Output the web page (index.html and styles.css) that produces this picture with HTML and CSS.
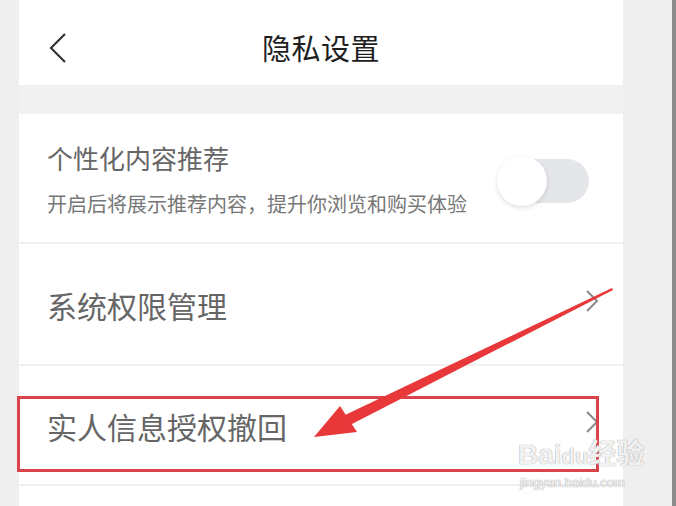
FILE: index.html
```html
<!DOCTYPE html>
<html lang="zh-CN">
<head>
  <meta charset="UTF-8">
  <meta name="viewport" content="width=device-width, initial-scale=1.0">
  <title>隐私设置</title>
  <link rel="stylesheet" href="styles.css">
</head>
<body>
  <div class="screen">
    <div class="gutter"></div>

    <main class="panel">
      <header class="topbar">
        <svg class="back" width="20" height="32" viewBox="0 0 20 32">
          <polyline points="17,2 3,16 17,30" fill="none" stroke="#333" stroke-width="2.2" />
        </svg>
        <h1>隐私设置</h1>
      </header>

      <div class="band"></div>

      <section class="row row-toggle">
        <div class="row-text">
          <div class="row-title small">个性化内容推荐</div>
          <div class="row-desc">开启后将展示推荐内容，提升你浏览和购买体验</div>
        </div>
        <div class="switch">
          <span class="knob"></span>
        </div>
      </section>

      <section class="row row-link">
        <div class="row-title">系统权限管理</div>
        <svg class="chev" width="14" height="24" viewBox="0 0 14 24">
          <polyline points="2,2 12,12 2,22" fill="none" stroke="#8a8a8a" stroke-width="2" />
        </svg>
      </section>

      <section class="row row-link">
        <div class="row-title">实人信息授权撤回</div>
        <svg class="chev" width="14" height="24" viewBox="0 0 14 24">
          <polyline points="2,2 12,12 2,22" fill="none" stroke="#8a8a8a" stroke-width="2" />
        </svg>
      </section>
    </main>

    <div class="gutter-right"></div>

    <!-- annotation drawn over the screenshot -->
    <div class="mark-box"></div>
    <svg class="arrow" width="676" height="506" viewBox="0 0 676 506">
      <polygon points="612,288 613,290 350,425 345,415" fill="#e8383a" />
      <polygon points="314,437 340,406 357,432" fill="#e8383a" />
    </svg>

    <div class="watermark">
      <div class="wm-logo">Bai<span class="paw">du</span>经验</div>
      <div class="wm-url">jingyan.baidu.com</div>
    </div>
  </div>
</body>
</html>
```

FILE: styles.css
```css
body {
  margin: 0;
  background: #efefef;
  font-family: "Noto Sans CJK SC", "Noto Sans", sans-serif;
}

.screen {
  position: relative;
  display: flex;
  width: 676px;
  height: 506px;
  overflow: hidden;
}

.gutter {
  width: 19px;
  background: #efefef;
}

.gutter-right {
  width: 49px;
  background: #efefef;
  border-right: 4px solid #8c8c8c;
}

.panel {
  width: 604px;
  background: #fff;
  display: flex;
  flex-direction: column;
}

.topbar {
  position: relative;
  height: 85px;
  display: flex;
  align-items: center;
  justify-content: center;
}

.topbar .back {
  position: absolute;
  left: 29px;
  top: 32px;
}

.topbar h1 {
  margin: 8px 0 0;
  font-size: 29px;
  font-weight: 400;
  color: #1e1e1e;
  letter-spacing: 0.5px;
}

.band {
  height: 29px;
  background: #f1f1f1;
}

.row {
  display: flex;
  align-items: center;
  justify-content: space-between;
  padding: 0 28px 0 28px;
  border-bottom: 2px solid #f0f0f0;
}

.row-toggle {
  height: 128px;
}

.row-link {
  height: 120px;
}

.row-link:last-child {
  height: 118px;
}

.row-text {
  display: flex;
  flex-direction: column;
  gap: 18px;
  margin-top: 2px;
}

.row-title {
  font-size: 30px;
  color: #666;
  line-height: 36px;
}

.row-title.small {
  font-size: 26px;
  line-height: 32px;
}

.row-desc {
  font-size: 20px;
  color: #777;
  line-height: 24px;
}

.row-link .row-title {
  margin-top: 2px;
}

.switch {
  position: relative;
  width: 92px;
  height: 44px;
  margin-right: 6px;
  margin-top: 6px;
}

.switch::before {
  content: "";
  position: absolute;
  left: 14px;
  right: 0;
  top: 0;
  bottom: 0;
  border-radius: 22px;
  background: #e5e6ea;
}

.knob {
  position: absolute;
  left: 0;
  top: -3px;
  width: 50px;
  height: 50px;
  border-radius: 50%;
  background: #fff;
  box-shadow: 0 2px 5px rgba(0, 0, 0, 0.12);
}

.chev {
  margin-right: -4px;
  margin-top: -6px;
}

.mark-box {
  position: absolute;
  left: 17px;
  top: 396px;
  width: 576px;
  height: 70px;
  border: 3px solid #d8444a;
}

.arrow {
  position: absolute;
  left: 0;
  top: 0;
  pointer-events: none;
}

.watermark {
  position: absolute;
  left: 518px;
  top: 438px;
  color: rgba(255, 255, 255, 0.85);
  text-shadow: 0 0 1px #aaa, 0 0 1px #aaa;
  font-family: "Liberation Sans", "Noto Sans CJK SC", sans-serif;
}

.wm-logo {
  font-size: 28px;
  font-weight: 700;
  line-height: 34px;
}

.wm-logo .paw {
  font-size: 22px;
}

.wm-url {
  font-size: 13px;
  line-height: 18px;
  margin-left: 2px;
}
```
